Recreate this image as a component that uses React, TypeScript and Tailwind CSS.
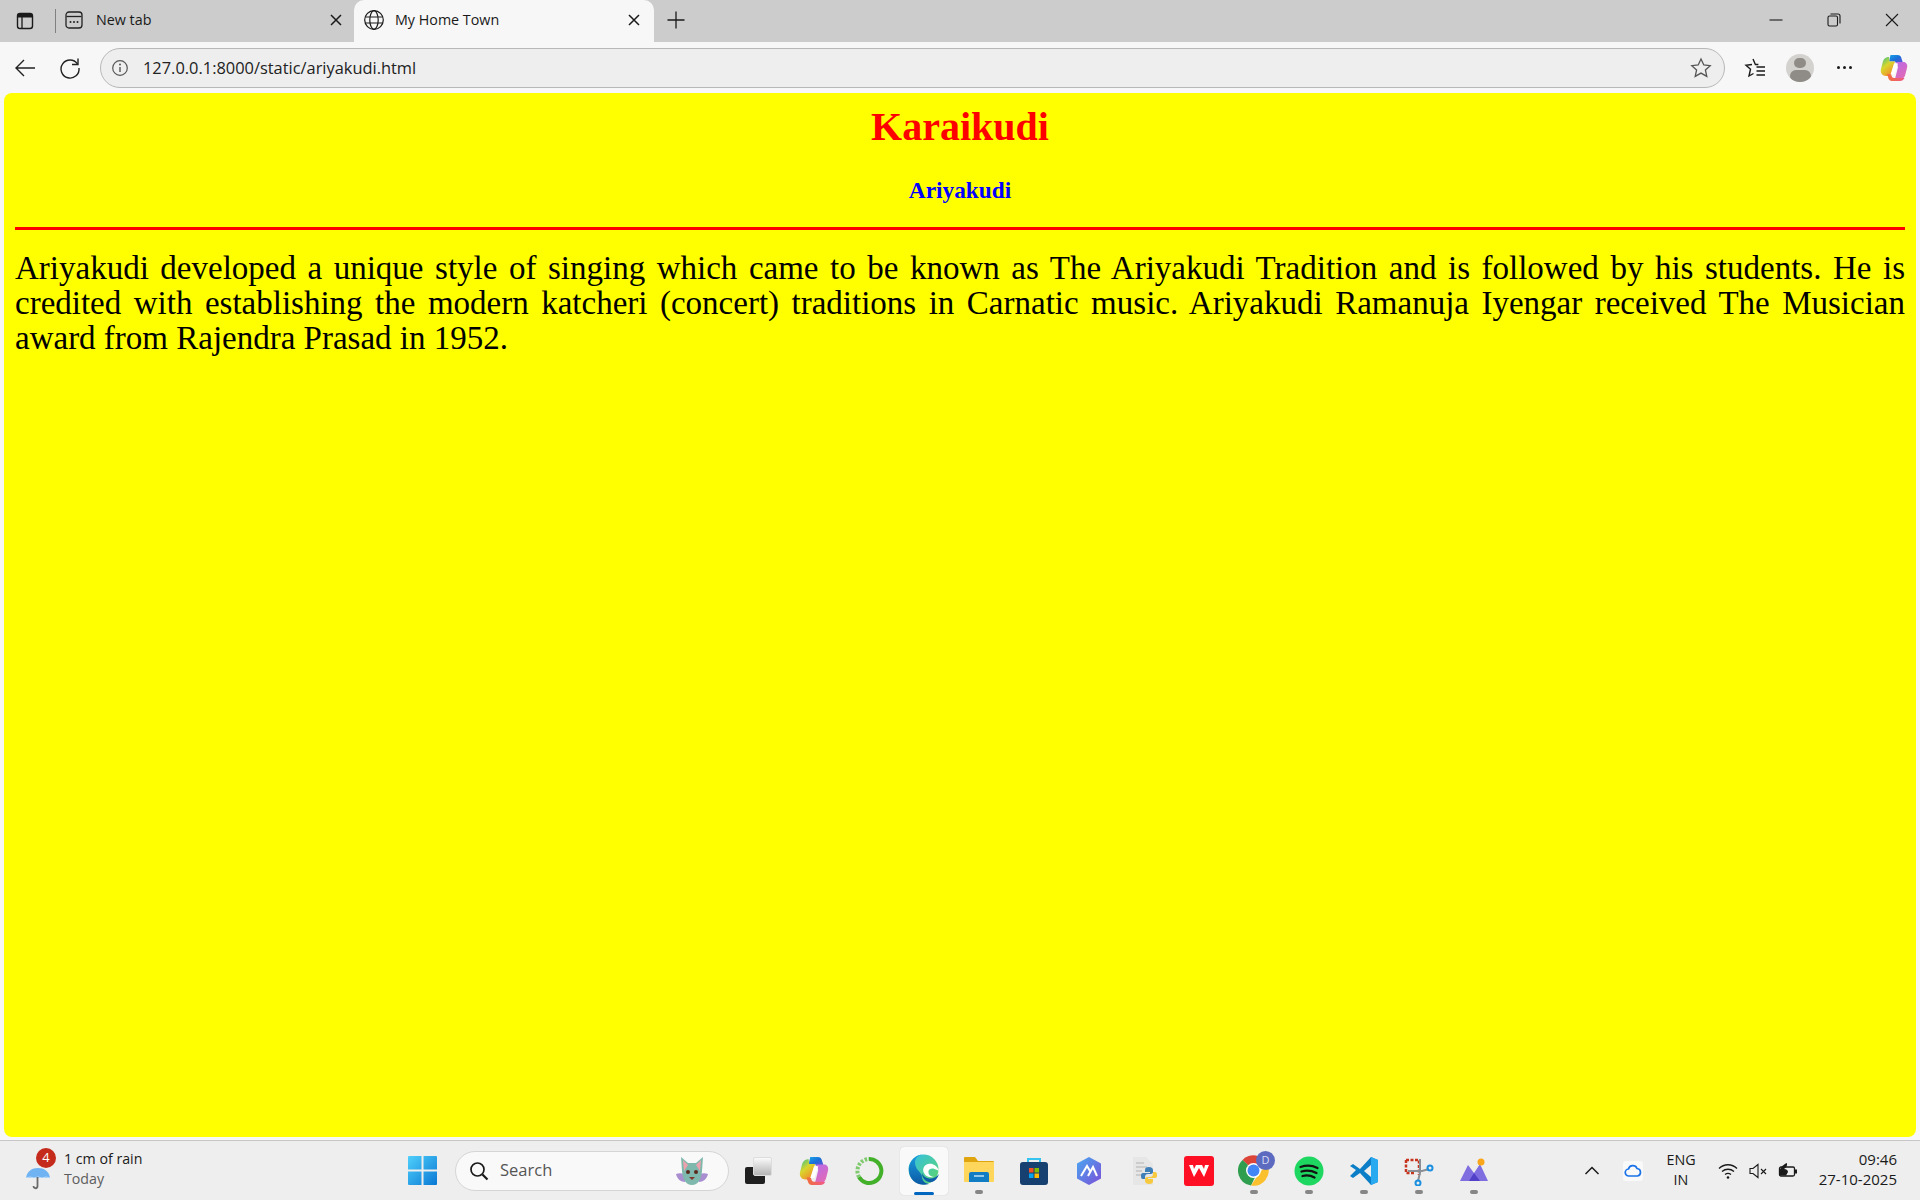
import React from "react";

const ui = { fontFamily: '"Open Sans","Noto Sans",sans-serif' };
const serif = { fontFamily: '"Liberation Serif",serif' };

function Sv({ s = 24, vb = "0 0 24 24", children, className = "" }: { s?: number; vb?: string; children: React.ReactNode; className?: string }) {
  return (
    <svg width={s} height={s} viewBox={vb} fill="none" className={"shrink-0 " + className}>
      {children}
    </svg>
  );
}

function CopilotIcon({ s = 28, id }: { s?: number; id: string }) {
  return (
    <Sv s={s} vb="0 0 28 28">
      <defs>
        <linearGradient id={id + "a"} x1="0" y1="0" x2="1" y2="1">
          <stop offset="0" stopColor="#1aa5e8" />
          <stop offset="0.5" stopColor="#1b6fd8" />
          <stop offset="1" stopColor="#6a4fd8" />
        </linearGradient>
        <linearGradient id={id + "b"} x1="0" y1="0" x2="0.600" y2="1">
          <stop offset="0" stopColor="#2fbf8f" />
          <stop offset="0.5" stopColor="#d9d62d" />
          <stop offset="1" stopColor="#f0902a" />
        </linearGradient>
        <linearGradient id={id + "c"} x1="0" y1="0" x2="0.500" y2="1">
          <stop offset="0" stopColor="#b86ce8" />
          <stop offset="1" stopColor="#e06ab8" />
        </linearGradient>
        <linearGradient id={id + "d"} x1="0" y1="0" x2="1" y2="0">
          <stop offset="0" stopColor="#f0703a" />
          <stop offset="1" stopColor="#f05a8a" />
        </linearGradient>
      </defs>
      <path d="M10.500 1h7c2.500 0 3.500 1.500 4 3.500L23 9h-7l-1-1.500H9z" fill={`url(#${id}a)`} />
      <path d="M9 3C5 3 3.500 5.500 2.800 8L1 15c-1 4 1.500 7 5 7h5l4-14.500H9.500z" fill={`url(#${id}b)`} />
      <path d="M16 8h7.500C26 8 28 10.500 27 14l-1.800 7c-.7 2.500-2.500 4-5 4H15l3-12z" fill={`url(#${id}c)`} />
      <path d="M11 20H7l1.500 4.500C9 26 10 27 12 27h8c2 0 3.500-1 4.500-3H14c-1.500 0-2.500-1.500-3-4z" fill={`url(#${id}d)`} />
      <path d="M14 9.500h4l-3.500 11h-4z" fill="#ffffff" />
    </Sv>
  );
}

function BatIcon() {
  return (
    <Sv s={34} vb="0 0 34 34">
      <path d="M1 20c5-2 9 0 11 3l-2 5c-4 0-8-3-9-8zM33 20c-5-2-9 0-11 3l2 5c4 0 8-3 9-8z" fill="#a98fd0" />
      <path d="M6 3l7 6h8l7-6-1 14c-.5 8-4 14-10 14S7.500 25 7 17z" fill="#7fb8ad" />
      <path d="M8 6l5 5-4 6zM26 6l-5 5 4 6z" fill="#eda1ad" />
      <circle cx="13" cy="18" r="2" fill="#5b2a1c" />
      <circle cx="21" cy="18" r="2" fill="#5b2a1c" />
      <path d="M14 23h6l-3 3z" fill="#7d3a2c" />
    </Sv>
  );
}

function Slot({ children, dot, active }: { children: React.ReactNode; dot?: boolean; active?: boolean }) {
  return (
    <div className={"relative w-[48px] h-[48px] mx-[3.500px] flex items-center justify-center rounded-[4px] " + (active ? "bg-[#f9f9f9] shadow-[0_0_1px_#bbbbbb]" : "")}>
      {children}
      {dot && <div className="absolute bottom-[1px] left-[20px] w-[8px] h-[4px] rounded-full bg-[#868686]" />}
      {active && <div className="absolute bottom-[0px] left-[14px] w-[20px] h-[3px] rounded-full bg-[#0067c0]" />}
    </div>
  );
}

export default function App() {
  return (
    <div className="w-[1920px] h-[1200px] flex flex-col overflow-hidden bg-[#f7f7f7] text-[#1a1a1a]" style={ui}>
      {/* Tab strip */}
      <div className="h-[42px] bg-[#cccccc] flex items-stretch shrink-0">
        <div className="w-[50px] flex items-center justify-center pr-[1px]">
          <Sv s={20} vb="0 0 20 20">
            <rect x="2.500" y="2.500" width="15" height="15" rx="2.500" stroke="#1a1a1a" strokeWidth="1.400" />
            <path d="M3 3h14v3.500H3z" fill="#1a1a1a" />
            <path d="M7 6v11" stroke="#1a1a1a" strokeWidth="1.300" />
          </Sv>
        </div>
        <div className="w-[1px] h-[24px] bg-[#808080] self-center mr-[8px] ml-[5px]" />
        <div className="w-[291px] flex items-center pb-[2px]">
          <Sv s={20} vb="0 0 20 20">
            <rect x="2" y="2" width="16" height="16" rx="3" stroke="#222222" strokeWidth="1.300" />
            <path d="M2.500 6.500h15" stroke="#222222" strokeWidth="1.300" />
            <circle cx="6.500" cy="12" r="1" fill="#222222" />
            <circle cx="10" cy="12" r="1" fill="#222222" />
            <circle cx="13.500" cy="12" r="1" fill="#222222" />
          </Sv>
          <span className="ml-[12px] text-[14.300px] flex-1">New tab</span>
          <Sv s={14} vb="0 0 14 14" className="mr-[12px]">
            <path d="M2 2l10 10M12 2L2 12" stroke="#1a1a1a" strokeWidth="1.500" />
          </Sv>
        </div>
        <div className="w-[300px] ml-[-1px] mt-0 bg-[#f7f7f7] rounded-t-[10px] flex items-center pl-[9px] pr-[13px] pb-[2px]">
          <Sv s={22} vb="0 0 22 22">
            <circle cx="11" cy="11" r="9.300" stroke="#1a1a1a" strokeWidth="1.200" />
            <ellipse cx="11" cy="11" rx="4.200" ry="9.300" stroke="#1a1a1a" strokeWidth="1.200" />
            <path d="M2 8h18M2 14h18" stroke="#1a1a1a" strokeWidth="1.200" />
          </Sv>
          <span className="ml-[10px] text-[14.300px] flex-1">My Home Town</span>
          <Sv s={14} vb="0 0 14 14">
            <path d="M2 2l10 10M12 2L2 12" stroke="#1a1a1a" strokeWidth="1.500" />
          </Sv>
        </div>
        <div className="ml-[12px] flex items-center pb-[2px]">
          <Sv s={20} vb="0 0 20 20">
            <path d="M10 1.500v17M1.500 10h17" stroke="#1a1a1a" strokeWidth="1.300" />
          </Sv>
        </div>
        <div className="flex-1" />
        <div className="flex items-center pr-[21px] gap-[44px] pb-[2px]">
          <Sv s={14} vb="0 0 14 14">
            <path d="M0.500 7h13" stroke="#1a1a1a" strokeWidth="1.100" />
          </Sv>
          <Sv s={14} vb="0 0 14 14">
            <rect x="1" y="3" width="9.500" height="10" rx="1.500" stroke="#1a1a1a" strokeWidth="1.100" />
            <path d="M3.500 1h7.500a2 2 0 0 1 2 2v7.500" stroke="#1a1a1a" strokeWidth="1.100" />
          </Sv>
          <Sv s={14} vb="0 0 14 14">
            <path d="M1 1l12 12M13 1L1 13" stroke="#1a1a1a" strokeWidth="1.100" />
          </Sv>
        </div>
      </div>

      {/* Toolbar */}
      <div className="h-[51px] shrink-0 flex items-center">
        <div className="w-[50px] flex justify-center">
          <Sv s={24} vb="0 0 24 24">
            <path d="M22 12H3M11 4l-8 8 8 8" stroke="#222222" strokeWidth="1.400" />
          </Sv>
        </div>
        <div className="w-[50px] flex justify-center mr-0 ml-[-5px]">
          <Sv s={24} vb="0 0 24 24">
            <path d="M19.500 8A9 9 0 1 0 21 12" stroke="#222222" strokeWidth="1.400" />
            <path d="M20 2.500V8.500h-6" stroke="#222222" strokeWidth="1.400" />
          </Sv>
        </div>
        <div className="w-[1625px] ml-[5px] h-[40px] rounded-full bg-[#eeeeee] border border-[#b8b8b8] flex items-center pl-[10px] pr-[12px]">
          <Sv s={18} vb="0 0 18 18">
            <circle cx="9" cy="9" r="7.300" stroke="#555555" strokeWidth="1.200" />
            <path d="M9 8v5" stroke="#555555" strokeWidth="1.400" />
            <circle cx="9" cy="5.500" r="1" fill="#555555" />
          </Sv>
          <span className="ml-[14px] text-[16.400px] flex-1 text-[#222222] pt-[1px]">127.0.0.1:8000/static/ariyakudi.html</span>
          <Sv s={22} vb="0 0 22 22">
            <path d="M11 2l2.800 6 6.400.7-4.800 4.300 1.400 6.400L11 16.100l-5.800 3.300 1.400-6.400L1.800 8.700 8.200 8z" stroke="#555555" strokeWidth="1.300" />
          </Sv>
        </div>
        <div className="ml-[19px] flex items-center">
          <Sv s={22} vb="0 0 22 22">
            <path d="M9 2l2.400 5.500h3M12.500 10H21M12.500 14H21M12.500 18H21M8 7.500l-6 .7 4.500 4L5 19l4.500-2.500" stroke="#1a1a1a" strokeWidth="1.400" />
          </Sv>
          <div className="ml-[20px] w-[28px] h-[28px] rounded-full bg-[#d4d2cf] flex flex-col items-center overflow-hidden">
            <div className="w-[12px] h-[12px] rounded-full bg-[#8f8b87] mt-[4px]" />
            <div className="w-[21px] h-[14px] rounded-full bg-[#8f8b87] mt-[2px]" />
          </div>
          <div className="ml-[23px] flex gap-[3px]">
            <div className="w-[3px] h-[3px] rounded-full bg-[#1a1a1a]" />
            <div className="w-[3px] h-[3px] rounded-full bg-[#1a1a1a]" />
            <div className="w-[3px] h-[3px] rounded-full bg-[#1a1a1a]" />
          </div>
          <div className="ml-[28px]">
            <CopilotIcon id="cp1" />
          </div>
        </div>
      </div>

      {/* Page */}
      <div className="flex-1 mx-[4px] bg-[#ffff00] rounded-[8px] px-[11px] pt-[11px]" style={serif}>
        <h1 className="text-center font-bold text-[#ff0000] text-[40px] leading-[46px]">Karaikudi</h1>
        <h3 className="text-center font-bold text-[#0000ff] text-[23.300px] leading-[26px] mt-[27px]">Ariyakudi</h3>
        <div className="h-[3px] bg-[#ff0000] mt-[24px]" />
        <div className="text-black text-[33px] leading-[35px] mt-[21px]">
          <div className="text-justify [text-align-last:justify]">Ariyakudi developed a unique style of singing which came to be known as The Ariyakudi Tradition and is followed by his students. He is</div>
          <div className="text-justify [text-align-last:justify]">credited with establishing the modern katcheri (concert) traditions in Carnatic music. Ariyakudi Ramanuja Iyengar received The Musician</div>
          <div>award from Rajendra Prasad in 1952.</div>
        </div>
      </div>

      <div className="h-[3px] shrink-0" />

      {/* Taskbar */}
      <div className="h-[60px] shrink-0 bg-[#eeeeee] border-t-[1.500px] border-[#c6c6c6] flex items-center">
        <div className="w-[397px] pl-[25px] flex items-center shrink-0">
          <div className="relative w-[39px] h-[40px] flex items-end">
            <Sv s={26} vb="0 0 26 26">
              <path d="M1 13C2 6 7 3 13 3s11 3 12 10z" fill="#6fb3f2" />
              <path d="M1 13l4-1 4 1 4-1 4 1 4-1 4 1" stroke="#d8ebfb" strokeWidth="0.800" />
              <path d="M12.500 12v9c0 3-4 3-4 0" stroke="#6a6a6a" strokeWidth="1.800" />
            </Sv>
            <div className="absolute top-[-3px] left-[11px] w-[20px] h-[20px] rounded-full bg-[#c42b1c] text-white text-[13px] flex items-center justify-center">4</div>
          </div>
          <div className="flex flex-col pb-[4px]">
            <span className="text-[14.200px] leading-[20px] text-[#1a1a1a]">1 cm of rain</span>
            <span className="text-[14.200px] leading-[20px] text-[#5d5d5d]">Today</span>
          </div>
        </div>

        <div className="w-[58px] shrink-0 flex justify-center pr-[8px]">
          <Sv s={29} vb="0 0 29 29">
            <defs>
              <linearGradient id="win" x1="0" y1="0" x2="1" y2="1">
                <stop offset="0" stopColor="#4fd0fb" />
                <stop offset="1" stopColor="#0a78d4" />
              </linearGradient>
            </defs>
            <path d="M0 1a1 1 0 0 1 1-1h12.500v13.500H0zM15.500 0H28a1 1 0 0 1 1 1v12.500H15.500zM0 15.500h13.500V29H1a1 1 0 0 1-1-1zM15.500 15.500H29V28a1 1 0 0 1-1 1H15.500z" fill="url(#win)" />
          </Sv>
        </div>

        <div className="w-[274px] h-[40px] mr-[2px] shrink-0 rounded-full bg-[#f9f9f9] border border-[#d5d5d5] flex items-center pl-[13px] pr-[19px]">
          <Sv s={20} vb="0 0 20 20">
            <circle cx="8.500" cy="8.500" r="6.500" stroke="#1a1a1a" strokeWidth="1.700" />
            <path d="M13.500 13.500l5 5" stroke="#1a1a1a" strokeWidth="2.200" />
          </Sv>
          <span className="ml-[11px] flex-1 text-[16.500px] text-[#555555]">Search</span>
          <BatIcon />
        </div>

        <div className="flex items-center shrink-0">
          <Slot>
            <div className="flex w-[27px] h-[27px] items-end">
              <div className="relative w-[27px] h-[27px]">
                <div className="absolute bottom-0 left-0 w-[20px] h-[17px] bg-[#1f1f1f] rounded-[2px]" />
                <div className="absolute top-0 right-0 w-[19px] h-[19px] bg-gradient-to-b from-[#fafafa] to-[#b5b5b5] rounded-[2px] border border-[#dddddd]" />
              </div>
            </div>
          </Slot>
          <Slot>
            <CopilotIcon id="cp2" s={30} />
          </Slot>
          <Slot>
            <Sv s={30} vb="0 0 30 30">
              <path d="M15 3a12 12 0 1 1-10 18" stroke="#43b02a" strokeWidth="4" />
              <path d="M5 21A12 12 0 0 1 15 3" stroke="#7fc96e" strokeWidth="4" strokeDasharray="2.500 1.500" />
            </Sv>
          </Slot>
          <Slot active>
            <Sv s={31} vb="0 0 31 31" className="mb-[3px]">
              <defs>
                <linearGradient id="e1" x1="0" y1="0" x2="1" y2="1">
                  <stop offset="0" stopColor="#33bfe8" />
                  <stop offset="1" stopColor="#5fd668" />
                </linearGradient>
                <linearGradient id="e2" x1="0" y1="0" x2="0" y2="1">
                  <stop offset="0" stopColor="#1a9ee0" />
                  <stop offset="1" stopColor="#0c59a4" />
                </linearGradient>
              </defs>
              <circle cx="15.500" cy="15.500" r="15" fill="url(#e1)" />
              <path d="M1 14C2 6 8 .5 15.500.5 9 1 5 6 8 13c1.500 4 6 6 6 10 0 3 2 6 7 7C10 33 0 26 1 14z" fill="url(#e2)" />
              <path d="M31 17c-2-6-7-8-11-7-4 1-6 5-4 9 2 4 6 5 10 4-4-.5-6-3-5.500-6 .5-2 3-3 6-2 2 .5 3.500 1.500 4.500 2z" fill="#ffffff" />
              <path d="M14 19c0 6 5 10 10 9 3-1 6-4 7-8-2 3-6 5-10 4.500-4-.5-6-3-7-5.500z" fill="#0f5fa8" />
            </Sv>
          </Slot>
          <Slot dot>
            <Sv s={30} vb="0 0 30 30" className="mb-[2px]">
              <path d="M0 3a1 1 0 0 1 1-1h10l3 4H29a1 1 0 0 1 1 1v3H0z" fill="#e0a40f" />
              <path d="M0 7h30v19a1 1 0 0 1-1 1H1a1 1 0 0 1-1-1z" fill="#ffd65c" />
              <path d="M5 19a2 2 0 0 1 2-2h16a2 2 0 0 1 2 2v8H5z" fill="#0f7cc4" />
              <path d="M10 21h10" stroke="#bfe3f7" strokeWidth="1.500" />
            </Sv>
          </Slot>
          <Slot>
            <Sv s={30} vb="0 0 30 30">
              <path d="M9 7V3h12v4" stroke="#35c3f0" strokeWidth="2" />
              <rect x="1" y="6" width="28" height="23" rx="3" fill="#15406f" />
              <rect x="10" y="12" width="4.500" height="4.500" fill="#f25022" />
              <rect x="15.500" y="12" width="4.500" height="4.500" fill="#7fba00" />
              <rect x="10" y="17.500" width="4.500" height="4.500" fill="#00a4ef" />
              <rect x="15.500" y="17.500" width="4.500" height="4.500" fill="#ffb900" />
            </Sv>
          </Slot>
          <Slot>
            <Sv s={30} vb="0 0 30 30">
              <defs>
                <linearGradient id="hx" x1="0" y1="0" x2="1" y2="1">
                  <stop offset="0" stopColor="#4aa8f0" />
                  <stop offset="1" stopColor="#7a4fd8" />
                </linearGradient>
              </defs>
              <path d="M15 1l12 6.500v15L15 29 3 22.500v-15z" fill="url(#hx)" />
              <path d="M7 20l6-10 3 5M14 20l5-9 4 9" stroke="#ffffff" strokeWidth="2" />
            </Sv>
          </Slot>
          <Slot>
            <Sv s={30} vb="0 0 30 30">
              <path d="M4 1h13l7 7v21H4z" fill="#e6e6e6" />
              <path d="M7 7h8M7 11h11M7 15h6M7 19h6" stroke="#c4c4c4" strokeWidth="1.500" />
              <path d="M20 11c-3 0-4 1-4 3v2h5v1h-7c-2 0-2 2-2 3s0 3 2 3h2v-2c0-2 1-3 3-3h3c1 0 2-1 2-2v-2c0-2-2-3-4-3z" fill="#3f7fb8" />
              <path d="M20 28c3 0 4-1 4-3v-2h-5v-1h7c2 0 2-2 2-3s0-3-2-3h-2v2c0 2-1 3-3 3h-3c-1 0-2 1-2 2v2c0 2 2 3 4 3z" fill="#f7c93e" />
            </Sv>
          </Slot>
          <Slot>
            <Sv s={30} vb="0 0 30 30">
              <rect width="30" height="30" rx="3" fill="#ff0f23" />
              <path d="M5 9l5 12 5-9 5 9 5-12h-4l-1 4-2-4h-6l-2 4-1-4z" fill="#ffffff" />
            </Sv>
          </Slot>
          <Slot dot>
            <div className="relative w-[31px] h-[31px] mb-[1px]">
              <Sv s={31} vb="0 0 31 31">
                <path d="M15.500 15.500L4.500 5A15 15 0 0 1 29 9z" fill="#db4437" />
                <path d="M4.500 5A15 15 0 0 0 13 30.500L19 18z" fill="#2f9e4f" />
                <path d="M29 9A15 15 0 0 1 13 30.500L20 20z" fill="#fbc02d" />
                <circle cx="15.500" cy="15.500" r="7.500" fill="#ffffff" />
                <circle cx="15.500" cy="15.500" r="6" fill="#4285f4" />
              </Sv>
              <div className="absolute top-[-4px] right-[-6px] w-[19px] h-[19px] rounded-full bg-[#5c6bc0] text-[#d8dcf5] text-[11px] flex items-center justify-center">D</div>
            </div>
          </Slot>
          <Slot dot>
            <Sv s={30} vb="0 0 30 30">
              <circle cx="15" cy="15" r="14.500" fill="#1ed760" />
              <path d="M6.500 11c6-2 12-1.500 17 1M7.500 15.500c5-1.500 10-1 15 1.500M8.500 20c4-1 8.500-.5 12 1.500" stroke="#121212" strokeWidth="2.300" strokeLinecap="round" />
            </Sv>
          </Slot>
          <Slot dot>
            <Sv s={30} vb="0 0 30 30">
              <path d="M1 10l3-2 7 5 11-12 7 3v22l-7 3-11-12-7 5-3-2 6-6z" fill="#0c7ec7" />
              <path d="M22 1l7 3v22l-7 3z" fill="#29a9f0" />
              <path d="M22 9l-7 6 7 6z" fill="#eeeeee" />
            </Sv>
          </Slot>
          <Slot dot>
            <Sv s={30} vb="0 0 30 30">
              <path d="M2 4h13v15" stroke="#c8351f" strokeWidth="2.500" strokeDasharray="3 1.500" />
              <path d="M2 4v13h9" stroke="#c8351f" strokeWidth="2.500" strokeDasharray="3 1.500" />
              <path d="M16 3v14l-2 8" stroke="#8a8f96" strokeWidth="2" />
              <path d="M4 15h14l7-2" stroke="#8a8f96" strokeWidth="2" />
              <circle cx="26" cy="12" r="2.500" stroke="#1a8fe0" strokeWidth="2" />
              <circle cx="14" cy="27" r="2.500" stroke="#1a8fe0" strokeWidth="2" />
            </Sv>
          </Slot>
          <Slot dot>
            <Sv s={30} vb="0 0 30 30">
              <path d="M1 25L9 9l6 8 6-9 8 17z" fill="#7f6ee0" />
              <path d="M10 25l5-8 6 8z" fill="#5140c8" />
              <circle cx="22" cy="6" r="3.500" fill="#f9a61a" />
            </Sv>
          </Slot>
        </div>

        <div className="flex-1" />

        <div className="flex items-center shrink-0 pr-[23px]">
          <Sv s={16} vb="0 0 16 16">
            <path d="M1.500 11L8 4.500l6.500 6.500" stroke="#1a1a1a" strokeWidth="1.500" />
          </Sv>
          <div className="ml-[23px] w-[20px] h-[20px] rounded-[3px] bg-[#f9f9f9] flex items-center justify-center">
            <Sv s={18} vb="0 0 18 18">
              <path d="M5 14a3.500 3.500 0 0 1-.5-7A4.500 4.500 0 0 1 13 6.500 3.800 3.800 0 0 1 13.500 14z" stroke="#1a73e8" strokeWidth="1.700" />
            </Sv>
          </div>
          <div className="ml-[20px] w-[36px] flex flex-col items-center text-[14.300px] leading-[20px] pb-[2px]">
            <span>ENG</span>
            <span>IN</span>
          </div>
          <div className="ml-[19px] flex items-center gap-[10px]">
            <Sv s={20} vb="0 0 20 20">
              <path d="M1 7.500c5-5 13-5 18 0M4 10.500c3.500-3 8.500-3 12 0M7 13.500c2-1.500 4-1.500 6 0" stroke="#1a1a1a" strokeWidth="1.300" />
              <circle cx="10" cy="16.500" r="1.300" fill="#1a1a1a" />
            </Sv>
            <Sv s={20} vb="0 0 20 20">
              <path d="M2 7.500h3l5-4v13l-5-4H2z" stroke="#1a1a1a" strokeWidth="1.100" />
              <path d="M13 8l5 5M18 8l-5 5" stroke="#1a1a1a" strokeWidth="1.100" />
            </Sv>
            <Sv s={20} vb="0 0 20 20">
              <rect x="1.500" y="6" width="15" height="9" rx="1.500" stroke="#1a1a1a" strokeWidth="1.300" />
              <rect x="17" y="8.500" width="2" height="4" fill="#1a1a1a" />
              <path d="M1 14C1 8 4 4 9 2c.5 3-1 5-3 6 2 0 4 1 4 3l-2 3.500H1z" fill="#1a1a1a" />
            </Sv>
          </div>
          <div className="ml-[22px] w-[77px] flex flex-col items-end text-[15px] leading-[20px] whitespace-nowrap pb-[4px]">
            <span>09:46</span>
            <span>27-10-2025</span>
          </div>
        </div>
      </div>
    </div>
  );
}
